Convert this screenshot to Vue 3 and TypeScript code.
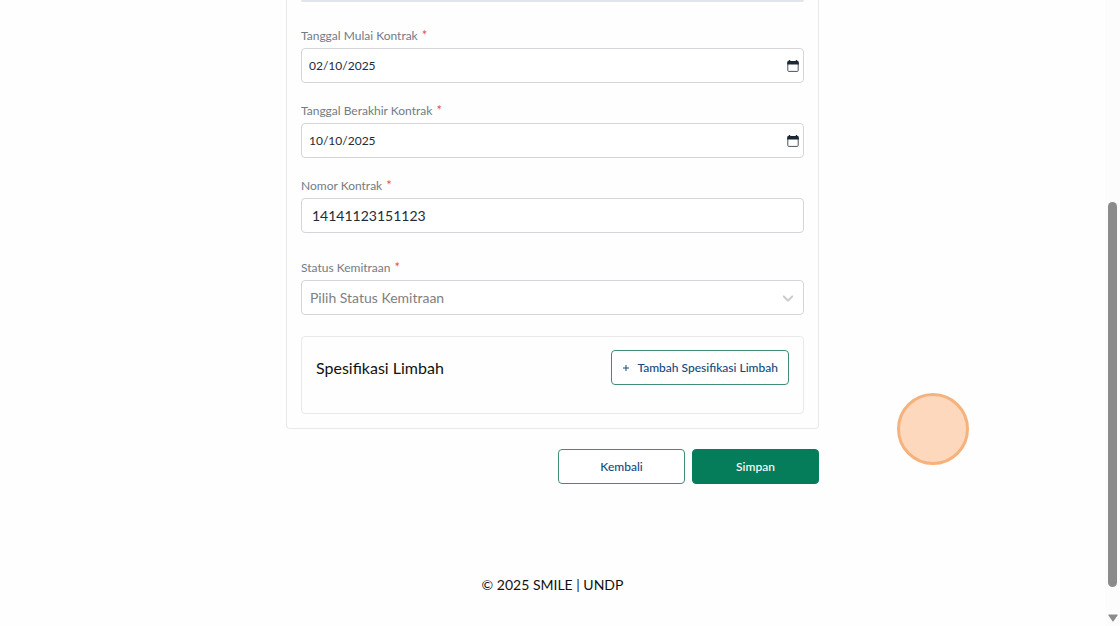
<script setup lang="ts">
import { ref } from 'vue'

const startDate = ref('2025-02-10')
const endDate = ref('2025-10-10')
const contractNumber = ref('14141123151123')
const status = ref('')
</script>

<template>
  <div class="shell">
    <div class="page">
      <form class="form" @submit.prevent>
        <div class="card">
          <div class="previous"></div>
          <div class="field">
            <label for="start">Tanggal Mulai Kontrak <span class="req">*</span></label>
            <div class="control-wrap">
              <input id="start" v-model="startDate" class="control date" type="date" />
              <svg class="calendar" viewBox="0 0 12 12" aria-hidden="true">
                <path class="frame" d="M.8 3v7.500q0 .9.9.9h8.600q.9 0 .9-.9V3" />
                <path class="top" d="M.2 4.500V2.200Q.2 1 1.400 1h.4V0h1.400v1h5.600V0h1.400v1h.4q1.200 0 1.200 1.200V4.500z" />
              </svg>
            </div>
          </div>
          <div class="field">
            <label for="end">Tanggal Berakhir Kontrak <span class="req">*</span></label>
            <div class="control-wrap">
              <input id="end" v-model="endDate" class="control date" type="date" />
              <svg class="calendar" viewBox="0 0 12 12" aria-hidden="true">
                <path class="frame" d="M.8 3v7.500q0 .9.9.9h8.600q.9 0 .9-.9V3" />
                <path class="top" d="M.2 4.500V2.200Q.2 1 1.400 1h.4V0h1.400v1h5.600V0h1.400v1h.4q1.200 0 1.200 1.200V4.500z" />
              </svg>
            </div>
          </div>
          <div class="field wide">
            <label for="number">Nomor Kontrak <span class="req">*</span></label>
            <input id="number" v-model="contractNumber" class="control number" type="text" />
          </div>
          <div class="field">
            <label for="status">Status Kemitraan <span class="req">*</span></label>
            <div class="control-wrap">
              <select id="status" v-model="status" class="control select">
                <option value="">Pilih Status Kemitraan</option>
              </select>
              <svg class="chevron" viewBox="0 0 20 20" aria-hidden="true">
                <path d="M4.516 7.548c0.436-0.446 1.043-0.481 1.576 0l3.908 3.747 3.908-3.747c0.533-0.481 1.141-0.446 1.574 0 0.436 0.445 0.408 1.197 0 1.615-0.406 0.418-4.695 4.502-4.695 4.502-0.217 0.223-0.502 0.335-0.787 0.335s-0.57-0.112-0.789-0.335c0 0-4.287-4.084-4.695-4.502s-0.436-1.17 0-1.615z" />
              </svg>
            </div>
          </div>
          <section class="spec">
            <h2>Spesifikasi Limbah</h2>
            <button type="button" class="btn outline add">
              <svg viewBox="0 0 8 8" aria-hidden="true"><path d="M4 1v6M1 4h6" /></svg>
              Tambah Spesifikasi Limbah
            </button>
          </section>
        </div>
        <div class="actions">
          <button type="button" class="btn outline action">Kembali</button>
          <button type="submit" class="btn primary action">Simpan</button>
        </div>
      </form>
      <footer>© 2025 SMILE | UNDP</footer>
    </div>
    <div class="scrollbar" aria-hidden="true">
      <div class="thumb"></div>
      <svg viewBox="0 0 10 8"><path d="M1 .5h8q1 0 .5 1L5.700 7q-.7 1-1.400 0L.5 1.500Q0 .5 1 .5z" /></svg>
    </div>
    <div class="pointer" aria-hidden="true"></div>
  </div>
</template>

<style>
body {
  margin: 0;
  background: #fefefe;
}
</style>

<style scoped>
.shell {
  position: relative;
  display: flex;
  height: 100vh;
  overflow: hidden;
  font-family: Lato, "Liberation Sans", sans-serif;
}
.shell * {
  box-sizing: border-box;
}
.page {
  flex: 1;
  min-width: 0;
}
.form {
  max-width: 533px;
  margin: 0 auto;
}
.card {
  padding: 0 14px 14px;
  border: 1px solid #e8e9eb;
  border-top: 0;
  border-radius: 0 0 4px 4px;
}
.previous {
  height: 2px;
  margin-bottom: 26px;
  background: #e0e4ec;
  border-radius: 0 0 4px 4px;
}
.field {
  display: flex;
  flex-direction: column;
  gap: 4px;
  margin-bottom: 20px;
}
.field.wide {
  margin-bottom: 27px;
}
label {
  font-size: 12px;
  line-height: 16px;
  color: #737b84;
}
.req {
  margin-left: 1px;
  font-size: 13px;
  line-height: 1;
  color: #e05252;
}
.control {
  width: 100%;
  height: 35px;
  margin: 0;
  border: 1px solid #d3d5d8;
  border-radius: 4px;
  background: #fff;
  color: #222b38;
  font-family: inherit;
}
.control-wrap {
  display: grid;
  align-items: center;
}
.control-wrap > * {
  grid-area: 1 / 1;
}
.date {
  padding: 0 3px 0 7px;
  font-size: 12px;
}
.date::-webkit-datetime-edit,
.date::-webkit-datetime-edit-month-field,
.date::-webkit-datetime-edit-day-field,
.date::-webkit-datetime-edit-year-field {
  padding: 0;
}
.date::-webkit-calendar-picker-indicator {
  opacity: 0;
}
.calendar {
  justify-self: end;
  width: 12px;
  height: 12px;
  margin-right: 5px;
  pointer-events: none;
}
.frame {
  fill: none;
  stroke: #4b535e;
}
.top {
  fill: #1d2836;
}
.number {
  padding: 0 10px;
  font-size: 14px;
}
.select {
  padding: 0 8px;
  font-size: 14px;
  color: #808080;
  appearance: none;
}
.chevron {
  justify-self: end;
  width: 18px;
  height: 18px;
  margin-right: 7px;
  fill: #ccc;
  pointer-events: none;
}
.spec {
  display: flex;
  align-items: center;
  justify-content: space-between;
  margin-top: 21px;
  padding: 13px 14px 28px;
  border: 1px solid #e8e9eb;
  border-radius: 4px;
}
.field:has(+ .spec) {
  margin-bottom: 0;
}
h2 {
  margin: 0;
  font-size: 16px;
  line-height: 20px;
  font-weight: 400;
  color: #111;
}
.btn {
  height: 35px;
  border: 1px solid #3f8d76;
  border-radius: 4px;
  font-family: inherit;
  font-size: 12px;
  font-weight: 500;
}
.outline {
  background: #fff;
  color: #134a80;
}
.primary {
  background: #067d5a;
  border-color: #067d5a;
  color: #fff;
}
.add {
  display: flex;
  align-items: center;
  gap: 7px;
  padding: 0 10px;
}
.add svg {
  width: 8px;
  height: 8px;
  fill: none;
  stroke: #134a80;
}
.actions {
  display: flex;
  justify-content: flex-end;
  gap: 7px;
  margin-top: 20px;
}
.action {
  width: 127px;
}
footer {
  margin-top: 91px;
  font-size: 14px;
  line-height: 20px;
  text-align: center;
  color: #111;
}
.scrollbar {
  display: flex;
  flex-direction: column;
  align-items: center;
  justify-content: flex-end;
  gap: 27px;
  width: 15px;
  padding-bottom: 4px;
  background: #fcfcfc;
}
.thumb {
  width: 9px;
  height: 385px;
  border-radius: 5px;
  background: #8b8b8b;
}
.scrollbar svg {
  width: 10px;
  height: 8px;
  fill: #8b8b8b;
}
.pointer {
  position: absolute;
  top: 393px;
  left: 897px;
  width: 72px;
  height: 72px;
  border: 3px solid #f6b27c;
  border-radius: 50%;
  background: #fdd8bc;
}
</style>
